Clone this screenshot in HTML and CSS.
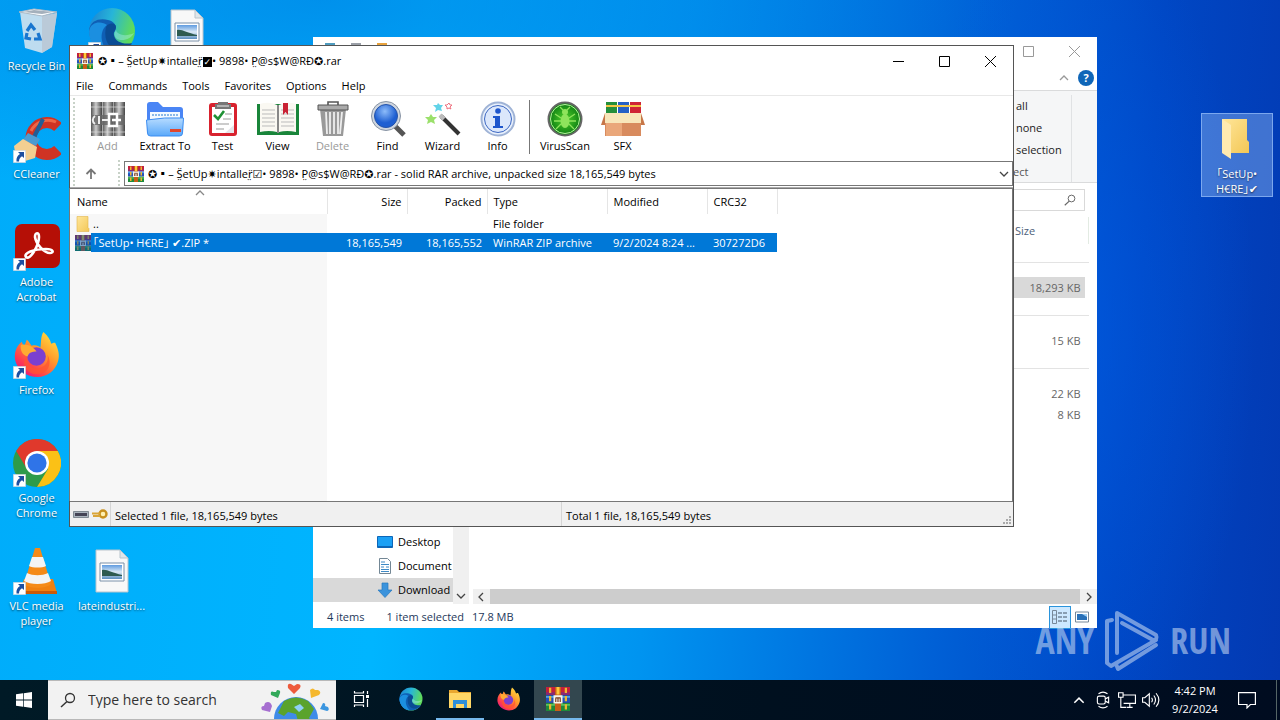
FILE: index.html
```html
<!DOCTYPE html>
<html lang="en">
<head>
<meta charset="utf-8">
<title>Desktop</title>
<link rel="stylesheet" href="styles.css">
</head>
<body>
<svg class="defs" aria-hidden="true">
  <defs>
    <linearGradient id="gFolder" x1="0" y1="0" x2="1" y2="1"><stop offset="0" stop-color="#ffe69a"/><stop offset="1" stop-color="#f3c756"/></linearGradient>
    <linearGradient id="gEdge" x1="0" y1="0" x2="1" y2="0.3"><stop offset="0" stop-color="#1a7fd4"/><stop offset=".5" stop-color="#27b5d8"/><stop offset="1" stop-color="#5fdb5a"/></linearGradient>
    <linearGradient id="gFox" x1="1" y1="0" x2=".2" y2="1"><stop offset="0" stop-color="#fff04a"/><stop offset=".45" stop-color="#ff9a2a"/><stop offset=".8" stop-color="#ff3b50"/><stop offset="1" stop-color="#e31587"/></linearGradient>
    <linearGradient id="gPhoto" x1="0" y1="0" x2="0" y2="1"><stop offset="0" stop-color="#5f9be0"/><stop offset=".5" stop-color="#dceaf5"/><stop offset="1" stop-color="#5b8fc0"/></linearGradient>
    <linearGradient id="gCyl" x1="0" y1="0" x2="1" y2="0"><stop offset="0" stop-color="#555"/><stop offset=".45" stop-color="#ccc"/><stop offset="1" stop-color="#444"/></linearGradient>
    <linearGradient id="gBlue" x1="0" y1="0" x2="0" y2="1"><stop offset="0" stop-color="#b8dcff"/><stop offset="1" stop-color="#5aa9fa"/></linearGradient>
    <radialGradient id="gGreen"><stop offset="0" stop-color="#4fd02a"/><stop offset="1" stop-color="#0c7d12"/></radialGradient>
    <radialGradient id="gLens" cx=".45" cy=".3"><stop offset="0" stop-color="#8dbcfa"/><stop offset="1" stop-color="#1e5fd2"/></radialGradient>
    <symbol id="winrar" viewBox="0 0 16 16">
      <path fill="#c3203c" d="M0 0h16v5H0z"/><path fill="#8a2a72" d="M0 3.500h16V5.300H0z"/>
      <path fill="#2450b8" d="M0 5.500h16v5H0z"/><path fill="#4aa0e8" d="M0 6h16v1.200H0z"/>
      <path fill="#1f8a3a" d="M0 10.700h16V16H0z"/><path fill="#5cc05c" d="M0 11.300h16v1.200H0z"/>
      <path fill="#f0b62e" d="M2 .5h1.500v3.500H2zM12.500 .5H14v3.500h-1.500zM2 6h1.500v3.500H2zM12.500 6H14v3.500h-1.500zM2 11.500h1.500V15H2zM12.500 11.500H14V15h-1.500z"/>
      <path fill="#c85f18" d="M6 0h4v16H6z"/><path fill="#ffc83a" d="M7 0h2v5H7z"/>
      <path fill="#f8f4ea" d="M5 5.500h6v5.500H5z"/><path d="M6.500 10V7.500M8 10V7.500M9.500 10V7.500M6.300 7.300h3.500" fill="none" stroke="#7b3d1f" stroke-width=".8"/>
    </symbol>
    <symbol id="shortcut" viewBox="0 0 13 13"><path fill="#fff" stroke="#bcc6d0" stroke-width=".6" d="M.3.3h12.400v12.400H.3z"/><path fill="#1d4fa0" d="M5 2h6v6L9 6.200C7 7.500 6 9 6 11.500H3.500C3 8 4.500 5.500 7 4z"/></symbol>
    <symbol id="edge" viewBox="0 0 48 48">
      <circle cx="24" cy="24" r="23" fill="url(#gEdge)"/>
      <path fill="#0f5fb5" d="M1 24C2 13 12 11 20 13c8 2 9 7 7 11-4 5-2 11 5 14 4 2 9 1 12-1C34 52 4 50 1 24z"/>
      <path fill="#1b8fe0" d="M1 24C3 14 14 14 19 18c-7 5-8 18 2 28C10 46 1 36 1 24z"/>
      <path fill="#0a4c94" d="M18 20c3-5 10-4 10 0 0 3-3 4-2 8 1 7 10 10 18 8C36 49 13 44 18 20z"/>
      <path fill="#bdf3ff" d="M28 23c1 5 10 7 18 3-3 7-14 9-18 5-2-2-2-5 0-8z" opacity=".35"/>
    </symbol>
    <symbol id="firefox" viewBox="0 0 48 48">
      <path fill="url(#gFox)" d="M30 1c5 4 7 8 8 12 2-1 3-1 4-1 3 6 5 12 3 19-3 10-11 16-21 16S3 40 1 29C0 20 4 14 8 11l2 6 3-8c2 1 3 4 5 6 4-1 7 0 9 2 1-6 0-11 3-16z"/>
      <circle cx="23" cy="26" r="9.500" fill="#7b3fd0"/><path fill="#ffab32" d="M7 14c7-1 13 2 16 7-4 0-8 1-9 5-5-1-8-6-7-12z"/><path fill="#ff5630" d="M14 25c-3 7 3 14 11 13 7-1 11-7 9-14 5 8 2 19-9 20C12 45 6 32 14 25z" opacity=".75"/>
    </symbol>
    <symbol id="picfile" viewBox="0 0 34 44">
      <path fill="#f8f8f8" stroke="#b9c4cc" d="M1 1h24l8 8v34H1z"/><path fill="#dfe6ea" stroke="#b9c4cc" d="M25 1v8h8z"/>
      <path fill="#fff" stroke="#7b90a8" d="M5 14h24v18H5z"/><path fill="url(#gPhoto)" d="M7 16h20v14H7z"/><path fill="#2e5b50" d="M7 21c5-1 10 3 20 5v1H7z"/>
    </symbol>
    <symbol id="chev" viewBox="0 0 10 6"><path d="M1 5l4-4 4 4" fill="none" stroke="currentColor" stroke-width="1.300"/></symbol>
    <symbol id="mag" viewBox="0 0 16 16"><circle cx="10" cy="6" r="4.500" fill="none" stroke="currentColor" stroke-width="1.300"/><path d="M7 9.500L1 15" stroke="currentColor" stroke-width="1.500"/></symbol>
  </defs>
</svg>

<main class="desktop">
  <div class="icons">
    <a href="#" class="shortcut c1 r1"><svg class="pic" viewBox="0 0 48 48"><path fill="#dfe7ee" d="M7 5l5 36 17 5 10-6 5-34-15 3z" opacity=".85"/><path fill="#b9c6d2" d="M29 9l15-3-5 34-10 6z" opacity=".8"/><path fill="#fbfdff" stroke="#aebac6" d="M6 5l15-3 23 3-15 4z"/><path fill="#a4b0bc" d="M10 5l11-2 19 2-11 2z"/><path fill="none" stroke="#1976cf" stroke-width="3.200" d="M14 24l4-6 4 5M25 26l2 6h-6M18 32l-5-1 1-5"/></svg><span>Recycle Bin</span></a>
    <a href="#" class="shortcut c1 r2"><svg class="pic" viewBox="0 0 48 48"><path fill="none" stroke="#cf3324" stroke-width="11" d="M45 12A16 16 0 1 0 45 35"/><path fill="none" stroke="#ee6747" stroke-width="3" d="M43 7A19 19 0 0 0 18 16"/><path stroke="#225e96" stroke-width="4" d="M30 4L20 24"/><path fill="#4a9bd2" d="M15 18l12 6-4 7-13-6z"/><path fill="#f3cf91" d="M10 24l14 8-2 11-10 3-10-9-1-6z"/><use href="#shortcut" x="0" y="35" width="13" height="13"/></svg><span>CCleaner</span></a>
    <a href="#" class="shortcut c1 r3"><svg class="pic" viewBox="0 0 48 48"><rect x="2" y="1" width="45" height="44" rx="7" fill="#b50f06"/><path d="M13 34c-3-4 8-8 20-8 8 0 8 4 4 4-6 0-14-9-15-16 0-5 4-5 4 0 0 8-9 24-13 20z" fill="none" stroke="#fff" stroke-width="2.600"/><use href="#shortcut" x="0" y="35" width="13" height="13"/></svg><span>Adobe Acrobat</span></a>
    <a href="#" class="shortcut c1 r4"><svg class="pic" viewBox="0 0 48 48"><use href="#firefox" x="1" y="0" width="47" height="47"/><use href="#shortcut" x="0" y="35" width="13" height="13"/></svg><span>Firefox</span></a>
    <a href="#" class="shortcut c1 r5"><svg class="pic" viewBox="0 0 48 48"><circle cx="24" cy="24" r="24" fill="#2e9b4a"/><path fill="#e0392c" d="M3.200 12A24 24 0 0 1 44.800 12H24L14 30z"/><path fill="#fbc116" d="M24 12h20.800A24 24 0 0 1 24 48l11-18z"/><circle cx="24" cy="24" r="12" fill="#fff"/><circle cx="24" cy="24" r="9.600" fill="#2f74e8"/><use href="#shortcut" x="0" y="35" width="13" height="13"/></svg><span>Google Chrome</span></a>
    <a href="#" class="shortcut c1 r6"><svg class="pic" viewBox="0 0 48 48"><path fill="#f08010" d="M11 32h29l4 14H7z"/><path fill="#ca5a08" d="M7 44h37v3H7z"/><path fill="#f58a18" d="M22 1h5l11 36c-5 5-22 5-27 0z"/><path fill="#f4f4f4" d="M19 10h11l3 9c-4 2-13 2-17 0zM14 26c6 3 15 3 21 0l3 8c-6 4-21 4-27 0z"/><use href="#shortcut" x="0" y="35" width="13" height="13"/></svg><span>VLC media player</span></a>
    <a href="#" class="shortcut c2 r1"><svg class="pic" viewBox="0 0 48 48"><use href="#edge" width="48" height="48"/><use href="#shortcut" x="0" y="35" width="13" height="13"/></svg></a>
    <a href="#" class="shortcut c3 r1"><svg class="pic" viewBox="0 0 48 48"><use href="#picfile" x="7" y="2" width="34" height="44"/></svg></a>
    <a href="#" class="shortcut c2 r6"><svg class="pic" viewBox="0 0 48 48"><use href="#picfile" x="7" y="2" width="34" height="44"/></svg><span>lateindustri...</span></a>
    <a href="#" class="shortcut picked c17 r2"><svg class="pic" viewBox="0 0 48 48"><path fill="url(#gFolder)" d="M9 4h25v21l2 2v11H15z"/><path fill="#ffeab0" d="M9 4l9 6v34l-9-6z"/></svg><span>｢SetUp• H€RE｣✔</span></a>
  </div>

  <section class="window explorer" aria-label="Downloads">
    <header class="ex-title">
      <div class="ex-quick"><i class="q1"></i><i class="q2"></i><i class="q3"></i></div>
      <button class="cap" aria-label="Maximize"><svg viewBox="0 0 11 11"><path d="M.5.5h10v10H.5z" fill="none" stroke="currentColor"/></svg></button>
      <button class="cap" aria-label="Close"><svg viewBox="0 0 11 11"><path d="M0 0l11 11M11 0L0 11" stroke="currentColor"/></svg></button>
    </header>
    <div class="ex-tabs"><svg class="chev"><use href="#chev"/></svg><button class="help" aria-label="Help">?</button></div>
    <div class="ex-ribbon"><div class="ex-group"><button>all</button><button>none</button><button>selection</button><span>ect</span></div></div>
    <div class="ex-address"><label class="ex-search"><input type="search" aria-label="Search Downloads"><svg><use href="#mag"/></svg></label></div>
    <div class="ex-body">
      <nav class="ex-nav">
        <div class="ex-tree">
          <a href="#"><svg viewBox="0 0 16 16"><path fill="#1ba0f5" stroke="#0c66b8" d="M.5 2.500h15v11H.5z"/><path fill="#0c66b8" d="M1 12h14v2H1z"/></svg>Desktop</a>
          <a href="#"><svg viewBox="0 0 16 16"><path fill="#fff" stroke="#738795" d="M2.500.5h8l3 3v12h-11z"/><path d="M4 4h4M4 6.500h8M4 9h3M9 9h3M4 11.500h8M4 13.500h8" stroke="#3f8ac5"/></svg>Document</a>
          <a href="#" class="on"><svg viewBox="0 0 16 16"><path fill="#3b93dc" stroke="#2678bd" stroke-width=".7" d="M5 1h6v7h4l-7 7.500L1 8h4z"/></svg>Download</a>
        </div>
        <div class="vbar"><svg class="chev down"><use href="#chev"/></svg></div>
      </nav>
      <div class="ex-main">
        <div class="ex-files">
          <table>
            <thead><tr><th scope="col">Size</th></tr></thead>
            <tbody><tr class="first"><td></td></tr><tr class="rule"><td></td></tr><tr class="sel"><td><span>18,293 KB</span></td></tr><tr class="gap"><td></td></tr></tbody>
            <tbody><tr class="rule"><td></td></tr><tr><td><span>15 KB</span></td></tr><tr class="gap"><td></td></tr></tbody>
            <tbody><tr class="rule"><td></td></tr><tr><td><span>22 KB</span></td></tr><tr><td><span>8 KB</span></td></tr></tbody>
          </table>
        </div>
        <div class="hbar"><svg class="chev left"><use href="#chev"/></svg><i></i><svg class="chev right"><use href="#chev"/></svg></div>
      </div>
    </div>
    <footer class="ex-status"><span class="n">4 items</span><span>1 item selected</span><span class="mb">17.8 MB</span>
      <button class="view on" aria-label="Details view"><svg viewBox="0 0 16 14"><path d="M.5.500h4v13h-4zM.5 5h4M.5 9h4" fill="none" stroke="#789"/><path d="M6 3h4M11 3h4M6 7h4M11 7h4M6 11h4M11 11h4" stroke="#456"/></svg></button>
      <button class="view" aria-label="Large icons view"><svg viewBox="0 0 16 14"><path d="M1.500 2h13v10h-13z" fill="#fff" stroke="#789"/><path fill="#2a71b8" d="M3 4h10v6H3z"/><path fill="#9fd0f5" d="M8 4h5v3z"/></svg></button>
    </footer>
  </section>

  <section class="window rar" aria-label="WinRAR">
    <header class="rar-title"><svg class="app"><use href="#winrar"/></svg>
      <h1>✪▪– S̤̈etUp✷intaller̤̈<b>✓</b>• 9898• P̤@s$W@RĐ✪.rar</h1>
      <button class="cap" aria-label="Minimize"><svg viewBox="0 0 11 11"><path d="M0 5.500h11" stroke="currentColor"/></svg></button>
      <button class="cap" aria-label="Maximize"><svg viewBox="0 0 11 11"><path d="M.5.5h10v10H.5z" fill="none" stroke="currentColor"/></svg></button>
      <button class="cap" aria-label="Close"><svg viewBox="0 0 11 11"><path d="M0 0l11 11M11 0L0 11" stroke="currentColor"/></svg></button>
    </header>
    <nav class="rar-menu"><button>File</button><button>Commands</button><button>Tools</button><button>Favorites</button><button>Options</button><button>Help</button></nav>
    <div class="rar-tools">
      <i class="grip"></i>
      <button disabled><svg viewBox="0 0 36 36"><path fill="url(#gCyl)" d="M1 1h11v34H1z"/><path fill="url(#gCyl)" d="M12.500 1h11v34h-11z"/><path fill="url(#gCyl)" d="M24 1h11v34H24z"/><path d="M1 6h34M1 31h34" stroke="#ddd" opacity=".7"/><path fill="#666" d="M1 14h34v10H1z" opacity=".8"/><path d="M5 15c-3 2-3 6 0 8M9 15v8M12 19h7" stroke="#eee" stroke-width="2" fill="none"/><path d="M19 13h8v12h-8zM22 19h9" fill="none" stroke="#fff" stroke-width="2.500"/></svg>Add</button>
      <button class="wide"><svg viewBox="0 0 38 36"><path fill="#4a85f5" d="M1 4q0-3 3-3h8l5 5h17q3 0 3 3v22H1z"/><path fill="#f4faff" d="M4 11h30v12H4z"/><path d="M6 14h26" stroke="#8bb9e8" stroke-width="2" stroke-dasharray="2 1"/><path fill="url(#gBlue)" stroke="#3d8df0" d="M.5 19q18-3 37-2l-1 15q0 3-3 3h-29q-3 0-3-3z"/><path fill="#e0462c" d="M24 28h11v3H24z"/></svg>Extract To</button>
      <button><svg viewBox="0 0 36 36"><rect x="4" y="2" width="28" height="33" rx="3" fill="#d8222e"/><path fill="#fff" d="M7 6h22v26H7z"/><path fill="#e5e5ea" d="M29 24v8h-9z"/><path fill="#777" d="M10 3h3V1h10v2h3v5H10z"/><path d="M12 5h12" stroke="#eee"/><path d="M9 14l4 4 6-8" fill="none" stroke="#1f9135" stroke-width="2.600"/><path d="M18 18h8M11 23h13M20 13h7M11 28h8" stroke="#999"/></svg>Test</button>
      <button><svg viewBox="0 0 44 36"><path fill="#19853a" d="M1 3h42v31H1z"/><path fill="#faf8f2" d="M4 3q9-3 17 1v27q-8-2-17 0zM23 4q8-4 17-1v28q-9-2-17 0z"/><path d="M6 9h13M6 13h13M6 17h13M6 21h13M6 25h13M25 9h13M25 13h13M25 17h13M25 21h13M25 25h13" stroke="#bbb"/><path fill="#c92234" d="M27 2h5v12l-2.500-3-2.500 3z"/><path fill="#888" d="M21 4h2v28h-2z"/></svg>View</button>
      <button disabled><svg viewBox="0 0 36 36"><path fill="#999" d="M5 8h26l-3 27H8z"/><path d="M11 11l1 22M15 11v22M19 11v22M23 11v22M27 11l-2 22" stroke="#eee" stroke-width="1.800"/><path fill="#aaa" stroke="#555" d="M3 4h30v5H3z"/><path d="M13 4V1h10v3" fill="none" stroke="#555" stroke-width="1.600"/></svg>Delete</button>
      <button><svg viewBox="0 0 36 36"><path d="M25 25l9 9" stroke="#555" stroke-width="5"/><circle cx="16" cy="15" r="14.500" fill="#cfd6df" stroke="#8793a3"/><circle cx="16" cy="15" r="11.500" fill="url(#gLens)" stroke="#2553a8"/></svg>Find</button>
      <button><svg viewBox="0 0 36 36"><path d="M16 15l18 18" stroke="#333" stroke-width="4"/><path d="M15 14l4 4" stroke="#bbb" stroke-width="4"/><path fill="#9be06b" d="M6 13l2 3 4 0-3 3 1 4-4-2-4 2 1-4-3-3h4z"/><path fill="#61d3e8" d="M13 2l2 2 3 0-2 3 1 3-4-1-3 2 1-4-3-3h4z"/><path fill="none" stroke="#ee7280" d="M24 2l1 2h2l-2 2 1 2-2-1-2 1V6l-2-2h2z"/></svg>Wizard</button>
      <button><svg viewBox="0 0 36 36"><circle cx="18" cy="18" r="16.500" fill="#e8f0fc" stroke="#9fb3d6" stroke-width="2"/><circle cx="18" cy="18" r="13.500" fill="#dbe7fb" stroke="#3c67c2"/><circle cx="18" cy="10" r="2.800" fill="#1d55cc"/><path fill="#1d55cc" d="M13 15h7v10h3v2H13v-2h2v-8h-2z"/></svg>Info</button>
      <i class="sep"></i>
      <button class="wide"><svg viewBox="0 0 36 36"><circle cx="18" cy="18" r="16.500" fill="url(#gGreen)" stroke="#666" stroke-width="2"/><circle cx="18" cy="18" r="14.500" fill="none" stroke="#b8f2a0"/><ellipse cx="18" cy="20" rx="4.500" ry="7" fill="#8fe45c"/><circle cx="18" cy="11" r="3" fill="#8fe45c"/><path d="M14 17l-6-4M14 20H7M14 23l-5 5M22 17l6-4M22 20h7M22 23l5 5M16 9l-3-3M20 9l3-3" stroke="#8fe45c" stroke-width="1.300"/></svg>VirusScan</button>
      <button><svg viewBox="0 0 44 36"><path fill="#258f3b" d="M5 1h11v15H5z"/><path fill="#2560c5" d="M17 1h11v15H17z"/><path fill="#cf2436" d="M29 1h11v15H29z"/><path d="M5 5h35" stroke="#f5c646" stroke-width="2"/><path fill="#f8e6ba" d="M4 12h36v11H4z"/><path fill="#d88b5e" d="M4 22h36v13H4z"/><path fill="#eaa77a" d="M5 22h16v13H5z"/><path fill="#c77748" d="M4 12L0 24h4zM40 12l4 12h-4z"/></svg>SFX</button>
    </div>
    <div class="rar-address">
      <i class="grip"></i>
      <button class="up" aria-label="Up one level"><svg viewBox="0 0 12 12"><path d="M6 11V1.500M1.500 6L6 1.500 10.500 6" fill="none" stroke="#777" stroke-width="1.800"/></svg></button>
      <i class="grip"></i>
      <label class="path"><svg class="app"><use href="#winrar"/></svg><select aria-label="Archive path"><option>✪▪– S̤̈etUp✷intaller̤̈☑• 9898• P̤@s$W@RĐ✪.rar - solid RAR archive, unpacked size 18,165,549 bytes</option></select><svg class="chev down"><use href="#chev"/></svg></label>
    </div>
    <div class="rar-list">
      <table>
        <colgroup><col class="w-name"><col class="w-num"><col class="w-num"><col class="w-type"><col class="w-mod"><col class="w-crc"></colgroup>
        <thead><tr><th scope="col">Name<svg class="chev sort"><use href="#chev"/></svg></th><th scope="col" class="num">Size</th><th scope="col" class="num">Packed</th><th scope="col">Type</th><th scope="col">Modified</th><th scope="col">CRC32</th></tr></thead>
        <tbody>
          <tr><td class="name"><div><svg viewBox="0 0 16 16"><path fill="url(#gFolder)" stroke="#e3b64c" stroke-width=".6" d="M2 .5h11v11l1 1v3H2z"/></svg><span>..</span></div></td><td></td><td></td><td>File folder</td><td></td><td></td></tr>
          <tr class="sel"><td class="name"><div><svg viewBox="0 0 16 16"><use href="#winrar" width="16" height="16"/><path fill="#0050a8" opacity=".5" d="M0 0h16v16H0z"/></svg><span>｢SetUp• H€RE｣ ✔.ZIP *</span></div></td><td class="num">18,165,549</td><td class="num">18,165,552</td><td>WinRAR ZIP archive</td><td>9/2/2024 8:24 ...</td><td>307272D6</td></tr>
        </tbody>
      </table>
    </div>
    <footer class="rar-status">
      <div class="st-icons"><svg viewBox="0 0 16 12"><path fill="#aab4bd" stroke="#6d7780" stroke-width=".8" d="M.5 3.500h15v6H.5z"/><path fill="#445" d="M2 5h12v3H2z"/></svg><svg viewBox="0 0 16 12"><circle cx="11" cy="6" r="3.500" fill="#fff0b0" stroke="#c8901e" stroke-width="2.400"/><path d="M0 5.500h8M1 8h7" stroke="#d9a436" stroke-width="2.200"/></svg></div>
      <div class="st-a">Selected 1 file, 18,165,549 bytes</div>
      <div class="st-b">Total 1 file, 18,165,549 bytes</div>
      <svg class="size" viewBox="0 0 9 9"><path fill="#aaa" d="M6 0h2v2H6zM3 3h2v2H3zM6 3h2v2H6zM0 6h2v2H0zM3 6h2v2H3zM6 6h2v2H6z"/></svg>
    </footer>
  </section>

  <div class="mark"><span>ANY</span><svg viewBox="0 0 58 64"><g fill="none" stroke="currentColor" stroke-width="4" stroke-linejoin="round" stroke-linecap="round"><path d="M14 44V4L53 26q2 5-3 5L19 14M9 11l-5 1v42l4 3 45-26M53 36L15 60l-2-5"/></g></svg><span>RUN</span></div>
</main>

<footer class="taskbar">
  <button class="start" aria-label="Start"><svg viewBox="0 0 16 16"><path fill="#fff" d="M0 2.300L7 1.300v6.300H0zM7.700 1.200L16 0v7.600H7.700zM0 8.400h7v6.300L0 13.700zM7.700 8.400H16V16l-8.300-1.200z"/></svg></button>
  <label class="find"><svg class="glass"><use href="#mag"/></svg><input type="search" placeholder="Type here to search" aria-label="Type here to search">
    <svg class="earth" viewBox="0 0 72 38"><circle cx="36" cy="38" r="22" fill="#3f8be8"/><path fill="#5aa32c" d="M24 20q12-7 24 0l6 8-5 9 3 3H38l-2-7-8-2-4 4-6-3z"/><path fill="#8fd0f5" d="M34 26l6-3 4 4-5 4z"/><path fill="#ee5a3c" d="M34 13l-6-6q-1-5 3-4l3 2 3-2q5 0 3 4z"/><path fill="#33a95a" d="M18 17l-7-3q-1-5 3-3l2 0 1-2q4 0 3 3z"/><path fill="#f5b82e" d="M51 17l-1-8q3-3 5 0l3 0q4 2 1 5z"/><path fill="#a66fd0" d="M10 31l-8-2q-2-4 2-4l1-3q5-3 7 3z"/><path fill="#3b96e0" d="M60 28l3-6q3 0 2 3l3 1q2 3-1 4z"/></svg></label>
  <button class="task first" aria-label="Task View"><svg class="tv" viewBox="0 0 18 18"><path d="M2.500 5.500h9v7h-9zM2.500 1v2h9V1M2.500 17v-2h9v2M15.500 1v3M15.500 9v8" fill="none" stroke="#fff" stroke-width="1.200"/><path fill="#fff" d="M14 5h3v3h-3z"/></svg></button>
  <button class="task" aria-label="Edge"><svg><use href="#edge"/></svg></button>
  <button class="task open" aria-label="File Explorer"><svg viewBox="0 0 24 24"><path fill="#e9a830" d="M1 3h8l2 2h12v4H1z"/><path fill="#ffd766" d="M1 6h22v15H1z"/><path fill="#2f8fd8" d="M5 13h14v8h-3v-4H8v4H5z"/></svg></button>
  <button class="task" aria-label="Firefox"><svg><use href="#firefox"/></svg></button>
  <button class="task open active" aria-label="WinRAR"><svg><use href="#winrar"/></svg></button>
  <div class="tray">
    <button aria-label="Show hidden icons"><svg class="tchev"><use href="#chev"/></svg></button>
    <button aria-label="Meet now"><svg viewBox="0 0 16 16"><rect x="3" y="4.500" width="7" height="7" rx="1.500" fill="none" stroke="#fff"/><path d="M10 7l3-1.500v5L10 9M4 2.500q4-3 8 0M4 13.500q4 3 8 0" fill="none" stroke="#fff"/></svg></button>
    <button aria-label="Network"><svg viewBox="0 0 16 16"><path d="M5 3.500h10.500v7.500H5M8 14.500h5M10.500 11v3.500M.5 1.500h4v4h-4zM2.500 5.500v9h5" fill="none" stroke="#fff"/></svg></button>
    <button aria-label="Volume"><svg viewBox="0 0 16 16"><path d="M.5 6v4h2l4 3.500v-11L2.500 6zM8.500 6q1.500 2 0 4M10.500 4q3 4 0 8M12.500 2q5 6 0 12" fill="none" stroke="#fff"/></svg></button>
    <time datetime="2024-09-02T16:42">4:42 PM<br>9/2/2024</time>
    <button class="note" aria-label="Notifications"><svg viewBox="0 0 16 16"><path d="M.5 1.500h15v10.500H11L8 15l0-3H.5z" fill="none" stroke="#fff" stroke-width="1.100"/></svg></button>
  </div>
</footer>
</body>
</html>
```
FILE: styles.css
```css
* { box-sizing: border-box; }
html, body { height: 100%; }
body {
  margin: 0;
  display: flex;
  flex-direction: column;
  overflow: hidden;
  font: 11px/16px "Open Sans", "Noto Sans", "Noto Sans CJK JP", "DejaVu Sans", sans-serif;
  color: #000;
}
button, input, select { font: inherit; color: inherit; margin: 0; padding: 0; border: 0; background: none; outline: 0; }
button { display: flex; align-items: center; justify-content: center; }
a { color: inherit; text-decoration: none; }
svg { display: block; flex: none; }
i { display: block; }
table { border-collapse: collapse; table-layout: fixed; }
th { font-weight: 400; text-align: left; }
.defs { position: absolute; width: 0; height: 0; }
.chev { width: 10px; height: 6px; color: #444; }
.down { transform: rotate(180deg); }
.left { transform: rotate(-90deg); }
.right { transform: rotate(90deg); }
.cap { width: 46px; height: 100%; }
.cap svg { width: 11px; height: 11px; }
.app { width: 16px; height: 16px; }

/* Desktop */
.desktop {
  position: relative;
  flex: 1;
  min-height: 0;
  background:
    radial-gradient(ellipse 180px 420px at 84% 48%, rgba(0, 92, 230, .55), rgba(0, 92, 230, 0)),
    radial-gradient(ellipse 700px 200px at 25% 0, rgba(0, 122, 224, .6), rgba(0, 122, 224, 0)),
    linear-gradient(95deg, #00acfa 0%, #00b5ff 32%, #0094f0 52%, #0060d6 74%, #0047c4 87%, #0339b2 100%);
}
.icons {
  display: grid;
  grid-template-columns: repeat(17, 75px);
  grid-auto-rows: 108px;
  padding-top: 5px;
}
.c1 { grid-column: 1; } .c2 { grid-column: 2; } .c3 { grid-column: 3; } .c17 { grid-column: 17; }
.r1 { grid-row: 1; } .r2 { grid-row: 2; } .r3 { grid-row: 3; } .r4 { grid-row: 4; } .r5 { grid-row: 5; } .r6 { grid-row: 6; }
.shortcut {
  display: flex;
  flex-direction: column;
  align-items: center;
  align-self: start;
  gap: 3px;
  padding: 2px 5px 3px 3px;
  color: #fff;
  line-height: 15px;
  text-align: center;
  text-shadow: 0 1px 2px rgba(0, 0, 0, .6);
}
.shortcut span { margin: 0 -3px; }
.pic { width: 48px; height: 48px; }
.picked { margin: 0 2px 0 1px; padding: 2px 8px 1px; background: rgba(140, 180, 240, .45); outline: 1px solid rgba(150, 190, 250, .7); outline-offset: -1px; }

.window { position: absolute; display: flex; flex-direction: column; background: #fff; }

/* File Explorer */
.explorer { left: 313px; top: 37px; width: 784px; height: 591px; color: #222; }
.ex-title { display: flex; height: 29px; color: #999; }
.ex-quick { display: flex; flex: 1; gap: 16px; padding: 6px 12px; }
.ex-quick i { width: 10px; height: 12px; }
.q1 { background: #4f9cc0; } .q2 { background: #9ba0a8; } .q3 { background: #e8a23c; }
.ex-tabs { display: flex; justify-content: flex-end; align-items: center; gap: 9px; height: 25px; padding-right: 3px; border-bottom: 1px solid #dadbdc; }
.ex-tabs .chev { color: #999; }
.help { width: 16px; height: 16px; border-radius: 50%; background: #0f66b8; color: #fff; font-weight: 700; }
.ex-ribbon { display: flex; height: 92px; padding: 4px 25px 0 0; justify-content: flex-end; background: #f5f6f7; border-bottom: 1px solid #dadbdc; }
.ex-group { display: flex; flex-direction: column; align-items: flex-start; width: 59px; padding-left: 3px; border-right: 1px solid #e0e2e4; line-height: 22px; }
.ex-group span { margin-left: -3px; color: #555; }
.ex-address { display: flex; justify-content: flex-end; align-items: center; height: 34px; padding-right: 12px; }
.ex-search { display: flex; align-items: center; width: 200px; height: 22px; padding: 0 8px; border: 1px solid #d9d9d9; }
.ex-search input { flex: 1; min-width: 0; }
.ex-search svg { width: 12px; height: 12px; color: #666; }
.ex-body { display: flex; flex: 1; min-height: 0; }
.ex-nav { display: flex; width: 156px; }
.ex-tree { display: flex; flex-direction: column; justify-content: flex-end; flex: 1; min-width: 0; padding-bottom: 2px; color: #000; }
.ex-tree a { display: flex; align-items: center; gap: 5px; height: 24px; padding-left: 64px; }
.ex-tree svg { width: 16px; height: 16px; }
.ex-tree .on { background: #d9d9d9; }
.vbar { display: flex; align-items: flex-end; width: 16px; padding: 0 3px 5px; background: #f0f0f0; }
.ex-main { display: flex; flex: 1; flex-direction: column; min-width: 0; margin-left: 4px; }
.ex-files { display: flex; flex: 1; justify-content: flex-end; align-items: flex-start; padding: 0 8px 0 0; }
.ex-files table { width: 76px; color: #666; }
.ex-files th { height: 27px; padding: 0 0 0 2px; color: #4c607a; border-right: 1px solid #e3ebe3; }
.ex-files td { height: 21px; padding: 0; text-align: right; }
.ex-files td span { display: block; margin-right: 4px; padding-right: 4px; line-height: 21px; }
.ex-files .sel span { background: #d9d9d9; }
.ex-files .rule td { height: 15px; border-top: 1px solid #e3e3e3; }
.ex-files .gap td { height: 17px; }
.ex-files .first td { height: 18px; }
.hbar { display: flex; align-items: center; gap: 4px; height: 15px; padding: 0 3px; background: #f0f0f0; }
.hbar i { flex: 1; align-self: stretch; background: #cdcdcd; }
.ex-status { display: flex; align-items: center; height: 24px; padding: 2px 4px 0 14px; color: #1e395b; }
.ex-status .n { margin-right: 22px; }
.ex-status .mb { margin-left: 8px; margin-right: auto; }
.view { width: 22px; height: 23px; }
.view svg { width: 16px; height: 14px; }
.view.on { background: #cce8ff; border: 1px solid #2a94dc; }

/* WinRAR */
.rar { left: 69px; top: 45px; width: 945px; height: 482px; border: 1px solid #555; }
.rar-title { display: flex; align-items: center; height: 30px; padding-left: 7px; }
.rar h1 { flex: 1; margin: 0 0 0 5px; font: inherit; white-space: nowrap; }
.rar h1 b { padding: 0 1px; background: #000; color: #fff; font: 9px/10px "DejaVu Sans", sans-serif; }
.rar-menu { display: flex; gap: 15px; height: 20px; padding-left: 6px; border-bottom: 1px solid #e8e8e8; }
.rar-tools { display: flex; height: 64px; padding: 2px 0 0 3px; }
.grip { width: 2px; background: repeating-linear-gradient(#c8d2c8 0 2px, #fff 2px 4px); }
.rar-tools .grip { margin-right: 5px; }
.rar-tools button { flex-direction: column; justify-content: flex-start; width: 55px; padding-top: 3px; gap: 1px; white-space: nowrap; }
.rar-tools .wide { width: 60px; }
.rar-tools svg { height: 36px; }
.rar-tools button:disabled { color: #999; }
.sep { width: 1px; height: 54px; margin: 2px 5px 0 4px; background: #777; }
.rar-address { display: flex; height: 28px; padding-left: 3px; border-bottom: 1px solid #aaa; background: #fff; }
.up { width: 32px; margin-right: 11px; }
.up svg { width: 12px; height: 12px; }
.path { display: flex; flex: 1; align-items: center; gap: 4px; height: 25px; margin: 1px 0 0 4px; padding: 0 3px; border: 1px solid #777; }
.path select { flex: 1; min-width: 0; appearance: none; }
.rar-list { flex: 1; min-height: 0; margin-left: -1px; border: solid #777; border-width: 1px 1px 0; background: linear-gradient(#f7f7f7, #f7f7f7) 0 25px / 257px 100% no-repeat #fff; }
.rar-list table { width: 707px; }
.w-name { width: 257px; } .w-num { width: 80px; } .w-type { width: 120px; } .w-mod { width: 100px; } .w-crc { width: 70px; }
.rar-list th { position: relative; height: 25px; padding: 0 6px; border-right: 1px solid #e5e5e5; }
.rar-list th:first-child { padding-left: 7px; }
.sort { position: absolute; top: 1px; left: 125px; color: #888; }
.rar-list td { height: 19px; padding: 0 6px; line-height: 19px; white-space: nowrap; }
.rar-list .num { text-align: right; padding-right: 5px; }
.rar-list .name { padding: 0 0 0 5px; }
.name div { display: flex; align-items: center; }
.name svg { width: 16px; height: 16px; }
.name span { flex: 1; padding-left: 2px; }
.rar-list .sel { color: #fff; }
.rar-list .sel td:not(.name), .sel .name span { background: #0078d7; }
.rar-status { display: flex; height: 25px; line-height: 27px; border-top: 1px solid #777; background: #f0f0f0; }
.st-icons { display: flex; gap: 3px; align-items: center; width: 41px; padding-left: 3px; border-right: 1px solid #d5d5d5; }
.st-icons svg { width: 16px; height: 12px; }
.st-a { width: 451px; padding-left: 4px; border-right: 1px solid #d5d5d5; }
.st-b { flex: 1; padding-left: 4px; }
.size { width: 9px; height: 9px; align-self: flex-end; margin: 0 1px 1px 0; }

.mark {
  position: absolute;
  right: 49px;
  bottom: 7px;
  display: flex;
  align-items: center;
  gap: 9px;
  color: rgba(190, 210, 240, .6);
  font: 300 36px/64px "Open Sans Condensed", "Open Sans Condensed Light", "Liberation Sans Narrow", sans-serif;
}
.mark svg { width: 58px; height: 64px; }

/* Taskbar */
.taskbar { display: flex; height: 40px; background: linear-gradient(90deg, #001a26, #00101f 60%, #000c20); color: #fff; }
.start { width: 48px; }
.start svg { width: 16px; height: 16px; }
.find { display: flex; align-items: center; gap: 12px; width: 288px; padding-left: 12px; background: #f2f2f2; border: 1px solid #b8b8b8; border-width: 1px 0; color: #333; }
.glass { width: 16px; height: 16px; }
.find input { flex: 1; min-width: 0; font-size: 14px; }
.find input::placeholder { color: #333; opacity: 1; }
.earth { width: 72px; height: 38px; margin-right: 4px; }
.task { width: 48px; margin-right: 1px; border-bottom: 2px solid transparent; }
.task.first { width: 50px; }
.task svg { width: 24px; height: 24px; }
.task .tv { width: 18px; height: 18px; }
.task.open { border-color: #76b9ed; }
.task.active { background-color: #33474f; }
.tray { display: flex; margin-left: auto; margin-right: 3px; border-right: 1px solid #566; }
.tray button { width: 24px; }
.tray svg { width: 18px; height: 18px; }
.tray .tchev { width: 12px; height: 7px; color: #fff; }
.tray time { width: 64px; padding-top: 2px; line-height: 18px; text-align: center; }
.tray .note { width: 40px; margin-right: 9px; }
```
